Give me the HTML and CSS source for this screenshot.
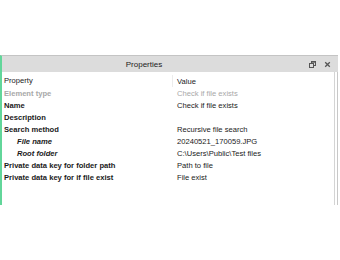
FILE: index.html
```html
<!DOCTYPE html>
<html>
<head>
<meta charset="utf-8">
<link rel="stylesheet" href="styles.css">
</head>
<body>
<div class="top"></div>
<div class="panel">
  <div class="titlebar">
    <div class="title">Properties</div>
    <div class="buttons">
      <svg class="ico" width="7" height="7" viewBox="0 0 7 7">
        <rect x="2.5" y="0.5" width="4" height="4" fill="none" stroke="#555" stroke-width="1"/>
        <rect x="0.5" y="2.5" width="4" height="4" fill="#dcdcdc" stroke="#555" stroke-width="1"/>
        <line x1="2.5" y1="1" x2="6.5" y2="1" stroke="#555" stroke-width="1.4"/>
      </svg>
      <svg class="ico" width="7" height="7" viewBox="0 0 7 7">
        <path d="M1.2 1.2 L5.8 5.8 M5.8 1.2 L1.2 5.8" stroke="#555" stroke-width="1.3"/>
      </svg>
    </div>
  </div>
  <div class="content">
    <div class="grid">
      <div class="row head"><div class="k">Property</div><div class="v">Value</div></div>
      <div class="row dim"><div class="k">Element type</div><div class="v">Check if file exists</div></div>
      <div class="row"><div class="k">Name</div><div class="v">Check if file exists</div></div>
      <div class="row"><div class="k">Description</div><div class="v"></div></div>
      <div class="row"><div class="k">Search method</div><div class="v">Recursive file search</div></div>
      <div class="row sub"><div class="k">File name</div><div class="v">20240521_170059.JPG</div></div>
      <div class="row sub"><div class="k">Root folder</div><div class="v">C:\Users\Public\Test files</div></div>
      <div class="row"><div class="k">Private data key for folder path</div><div class="v">Path to file</div></div>
      <div class="row"><div class="k">Private data key for if file exist</div><div class="v">File exist</div></div>
    </div>
  </div>
</div>
</body>
</html>
```
FILE: styles.css
```css
html, body {
  margin: 0;
  padding: 0;
  background: #ffffff;
}
body {
  width: 340px;
  height: 260px;
  font-family: "Liberation Sans", Arial, sans-serif;
  font-size: 7.6px;
  color: #1a1a1a;
}
* {
  box-sizing: border-box;
}
.top {
  height: 55px;
}
.panel {
  width: 338px;
  height: 150px;
  border-left: 2px solid #62d69a;
  border-top: 1px solid #c4c4c4;
  display: flex;
  flex-direction: column;
}
.titlebar {
  height: 16px;
  background: #dcdcdc;
  display: flex;
  align-items: center;
}
.title {
  width: 284px;
  text-align: center;
  color: #222;
  font-size: 8px;
}
.buttons {
  flex: 1;
  display: flex;
  align-items: center;
  padding-left: 23px;
  gap: 8px;
}
.ico {
  display: block;
}
.content {
  flex: 1;
  display: flex;
  border-right: 1px solid #c8c8c8;
  padding-right: 2px;
}
.grid {
  flex: 1;
  border-right: 1px solid #d4d4d4;
  padding-top: 3px;
}
.row {
  height: 12px;
  display: flex;
  align-items: center;
}
.row .k {
  width: 172px;
  padding-left: 2px;
  font-weight: bold;
  white-space: nowrap;
}
.row .v {
  flex: 1;
  padding-left: 3px;
  white-space: nowrap;
}
.row.head .k {
  font-weight: normal;
  height: 12px;
  line-height: 12px;
  border-right: 1px solid #ececec;
  width: 171px;
}
.row.head .v {
  padding-left: 4px;
}
.row.dim .k,
.row.dim .v {
  color: #a8a8a8;
}
.row.sub .k {
  font-style: italic;
  padding-left: 15px;
}
```
